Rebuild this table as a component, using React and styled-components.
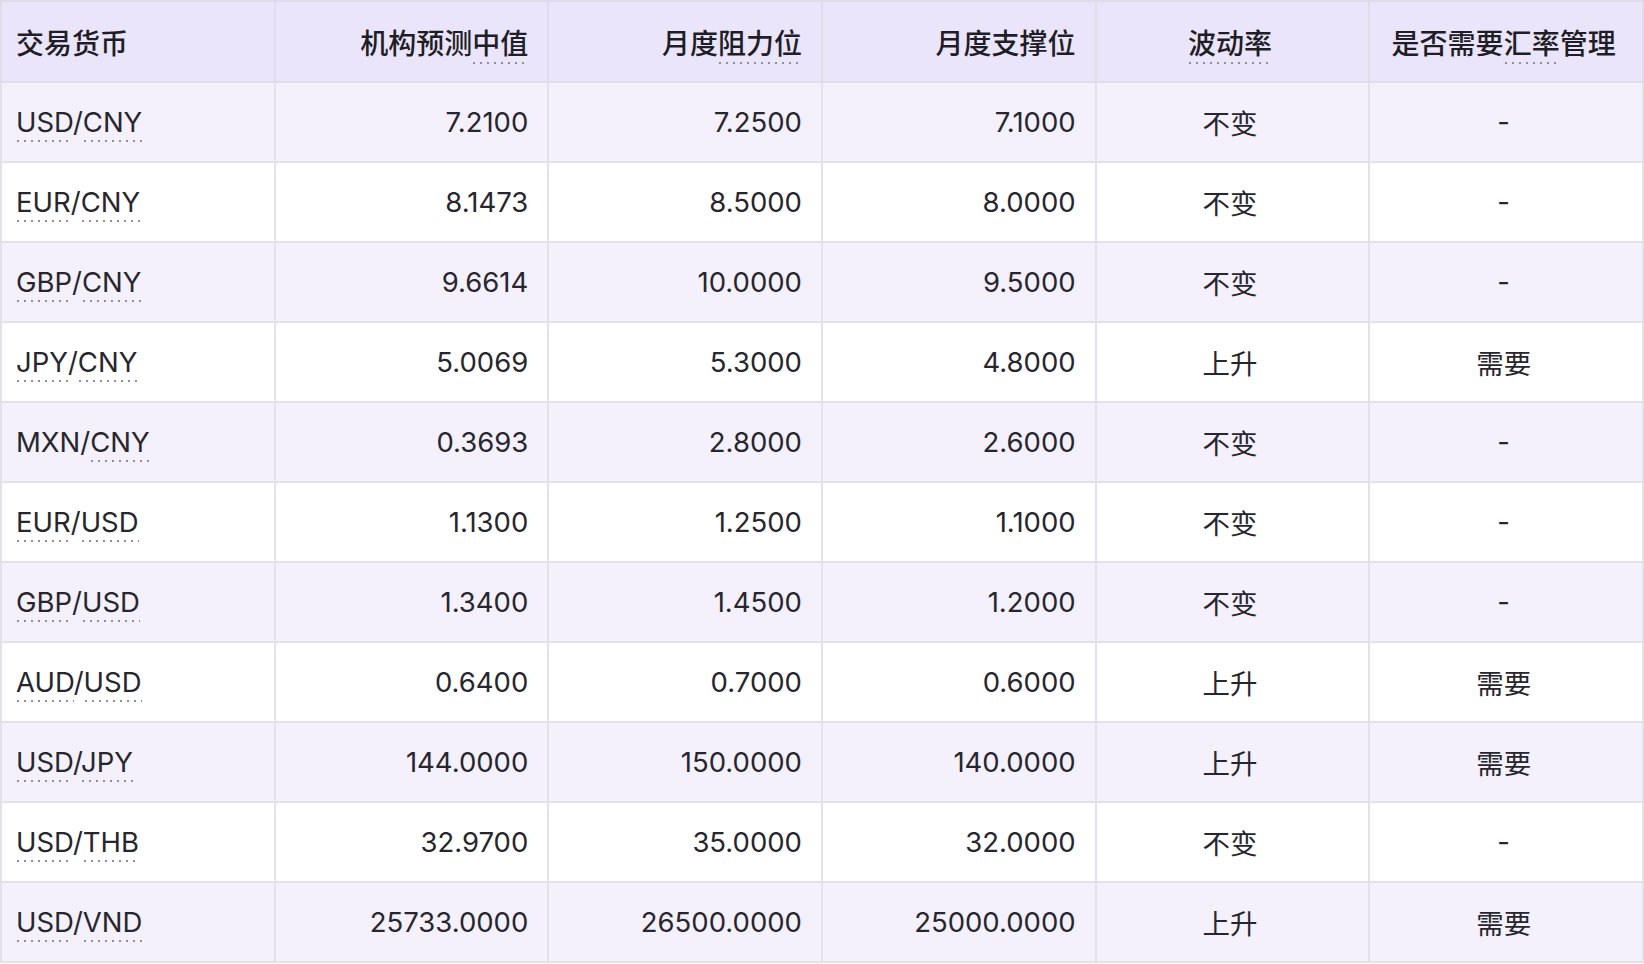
import React from "react";
import styled, { createGlobalStyle } from "styled-components";

const rows = [
  { pair: ["USD", "CNY"], mid: "7.2100", res: "7.2500", sup: "7.1000", vol: "不变", need: "-" },
  { pair: ["EUR", "CNY"], mid: "8.1473", res: "8.5000", sup: "8.0000", vol: "不变", need: "-" },
  { pair: ["GBP", "CNY"], mid: "9.6614", res: "10.0000", sup: "9.5000", vol: "不变", need: "-" },
  { pair: ["JPY", "CNY"], mid: "5.0069", res: "5.3000", sup: "4.8000", vol: "上升", need: "需要" },
  { pair: ["MXN", "CNY"], plain: ["MXN"], mid: "0.3693", res: "2.8000", sup: "2.6000", vol: "不变", need: "-" },
  { pair: ["EUR", "USD"], mid: "1.1300", res: "1.2500", sup: "1.1000", vol: "不变", need: "-" },
  { pair: ["GBP", "USD"], mid: "1.3400", res: "1.4500", sup: "1.2000", vol: "不变", need: "-" },
  { pair: ["AUD", "USD"], mid: "0.6400", res: "0.7000", sup: "0.6000", vol: "上升", need: "需要" },
  { pair: ["USD", "JPY"], mid: "144.0000", res: "150.0000", sup: "140.0000", vol: "上升", need: "需要" },
  { pair: ["USD", "THB"], mid: "32.9700", res: "35.0000", sup: "32.0000", vol: "不变", need: "-" },
  { pair: ["USD", "VND"], mid: "25733.0000", res: "26500.0000", sup: "25000.0000", vol: "上升", need: "需要" },
];

const App = () => {
  return (
    <>
      <GlobalStyle />
      <Table>
        <thead>
          <tr>
            <Th $align="left">交易货币</Th>
            <Th $align="right">
              机构预测<Term>中值</Term>
            </Th>
            <Th $align="right">
              月度<Term>阻力位</Term>
            </Th>
            <Th $align="right">月度支撑位</Th>
            <Th $align="center">
              <Term>波动率</Term>
            </Th>
            <Th $align="center">
              是否需要<Term>汇率</Term>管理
            </Th>
          </tr>
        </thead>
        <tbody>
          {rows.map((r, i) => (
            <Row key={i} $shaded={i % 2 === 0}>
              <Td $align="left">
                {(r.plain || []).includes(r.pair[0]) ? r.pair[0] : <Term>{r.pair[0]}</Term>}/
                <Term>{r.pair[1]}</Term>
              </Td>
              <Td $align="right">{r.mid}</Td>
              <Td $align="right">{r.res}</Td>
              <Td $align="right">{r.sup}</Td>
              <Td $align="center">{r.vol}</Td>
              <Td $align="center">{r.need}</Td>
            </Row>
          ))}
        </tbody>
      </Table>
    </>
  );
};

const GlobalStyle = createGlobalStyle`
  html, body {
    margin: 0;
    padding: 0;
    background: #ffffff;
  }
  body {
    font-family: Inter, "Noto Sans CJK SC", sans-serif;
    color: #27262e;
  }
`;

const Table = styled.table`
  width: 1644px;
  table-layout: fixed;
  border-collapse: collapse;
  border: 2px solid #e3e1e9;
  font-size: 27.5px;
`;

const Th = styled.th`
  height: 79px;
  padding: 0 19px 0 14px;
  background: #eae5fa;
  border: 2px solid #e0dce9;
  font-size: 28px;
  font-weight: 500;
  color: #1f1e26;
  text-align: ${({ $align }) => $align};
  vertical-align: middle;
  white-space: nowrap;
`;

const Row = styled.tr`
  background: ${({ $shaded }) => ($shaded ? "#f4f1fd" : "#ffffff")};
`;

const Td = styled.td`
  height: 78px;
  padding: 0 19px 0 14px;
  border: 2px solid #e3e1e9;
  text-align: ${({ $align }) => $align};
  vertical-align: middle;
  white-space: nowrap;
`;

const Term = styled.span`
  padding-bottom: 3px;
  background-image: linear-gradient(to right, #8f8e9a 2px, transparent 2px);
  background-size: 7px 2px;
  background-repeat: repeat-x;
  background-position: 1px 100%;
`;

export default App;
